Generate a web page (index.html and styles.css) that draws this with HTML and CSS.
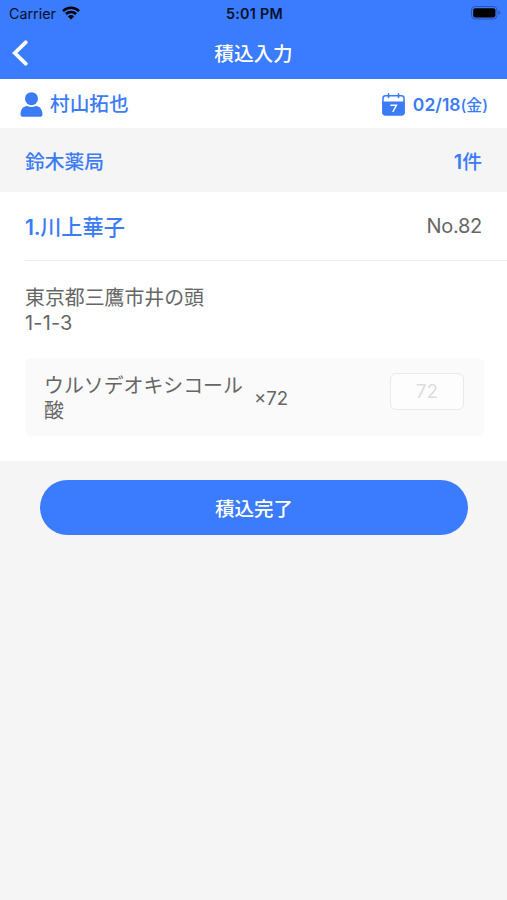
FILE: index.html
```html
<!DOCTYPE html>
<html lang="ja">
<head>
    <meta charset="UTF-8">
    <meta name="viewport" content="width=device-width, initial-scale=1.0">
    <title>積込入力</title>
    <link rel="stylesheet" href="styles.css">
</head>
<body>
    <header class="header">
        <div class="status-bar">
            <div class="carrier">
                <span>Carrier</span>
                <svg class="wifi" viewBox="0 0 18 14" width="18" height="14">
                    <path d="M1 5.1a11.5 11.5 0 0 1 16 0M3.9 8a7.4 7.4 0 0 1 10.2 0" fill="none" stroke="currentColor" stroke-width="2.5"/>
                    <path d="M9 13.6L5.9 10.4a4.5 4.5 0 0 1 6.2 0z" fill="currentColor"/>
                </svg>
            </div>
            <div class="clock">5:01 PM</div>
            <div class="battery">
                <svg viewBox="0 0 30 14" width="30" height="14">
                    <rect x=".5" y=".5" width="25.5" height="12.5" rx="3.5" fill="none" stroke="#2855b4"/>
                    <rect x="2.2" y="2.2" width="22.2" height="9.2" rx="2" fill="#000"/>
                    <path d="M27.5 4.6c2.2.7 2.2 3.6 0 4.3z" fill="#2855b4"/>
                </svg>
            </div>
        </div>
        <div class="nav-bar">
            <a class="back" href="#" aria-label="戻る">
                <svg viewBox="0 0 16 26" width="16" height="26">
                    <path d="M13.7 2.3L2.8 13l10.900 10.700" fill="none" stroke="#fff" stroke-width="3.8" stroke-linecap="round" stroke-linejoin="miter"/>
                </svg>
            </a>
            <h1>積込入力</h1>
        </div>
    </header>

    <div class="user-bar">
        <div class="user">
            <svg viewBox="0 0 22 25" width="22" height="25" fill="currentColor">
                <circle cx="11" cy="6.7" r="6.5"/>
                <path d="M0 22.5C0 17 3 14.2 6.5 14c3 1.2 6 1.2 9 0 3.5.2 6.5 3 6.5 8.5q0 2.200-2.200 2.200H2.200Q0 24.700 0 22.500z"/>
            </svg>
            <span>村山拓也</span>
        </div>
        <div class="date">
            <svg viewBox="0 0 23 23" width="23" height="23">
                <rect x="1" y="2.700" width="21" height="19" rx="2.500" fill="#fff" stroke="currentColor" stroke-width="1.500"/>
                <path d="M.3 8.500h22.400V19.500q0 3-3 3H3.300q-3 0-3-3z" fill="currentColor"/>
                <path d="M6.500 .8v3.600M16.500 .8v3.600" stroke="currentColor" stroke-width="1.600" stroke-linecap="round"/>
                <path d="M8.400 12.300h6L10.800 19" fill="none" stroke="#fff" stroke-width="1.500"/>
            </svg>
            <span>02/18<small>(金)</small></span>
        </div>
    </div>

    <div class="shop-bar">
        <span>鈴木薬局</span>
        <span><b>1</b>件</span>
    </div>

    <main class="patient">
        <div class="patient-head">
            <h2><b>1.</b>川上華子</h2>
            <span class="number">No.82</span>
        </div>
        <p class="address">東京都三鷹市井の頭<br><span class="block">1-1-3</span></p>
        <div class="medicine">
            <span class="medicine-name">ウルソデオキシコール酸</span>
            <span class="amount">×72</span>
            <input class="count" type="text" value="72" disabled>
        </div>
    </main>

    <div class="actions">
        <button class="submit" type="button">積込完了</button>
    </div>
</body>
</html>
```
FILE: styles.css
```css
* {
    box-sizing: border-box;
}
body {
    font-family: Inter, "Noto Sans CJK JP", sans-serif;
    font-size: 20px;
    margin: 0;
    background-color: #f5f5f5;
    color: #666;
}
h1, h2, p {
    margin: 0;
}
.header {
    height: 79px;
    background: #3b7bfd;
    color: #fff;
}
.status-bar {
    display: grid;
    grid-template-columns: 1fr auto 1fr;
    align-items: center;
    height: 27px;
    padding: 0 6px 0 9px;
    color: #07112a;
    font-size: 14.3px;
    line-height: 27px;
}
.carrier {
    display: flex;
    align-items: center;
    gap: 6px;
}
.wifi {
    color: #000;
    margin-top: -2px;
}
.clock {
    font-weight: 600;
    font-size: 14.3px;
    letter-spacing: 0.3px;
    margin-right: 1px;
}
.battery {
    display: flex;
    justify-content: flex-end;
    margin-top: -1px;
}
.nav-bar {
    display: grid;
    grid-template-columns: 1fr auto 1fr;
    align-items: center;
    height: 50px;
}
.nav-bar h1 {
    padding-top: 2px;
    font-size: 19.6px;
    font-weight: 500;
    line-height: 50px;
}
.back {
    display: flex;
    padding-left: 12px;
}
.user-bar {
    display: flex;
    justify-content: space-between;
    align-items: center;
    height: 49px;
    padding: 1px 19px 0 20px;
    background: #fff;
    color: #3b7bf5;
    font-weight: 500;
    line-height: 28px;
}
.user, .date {
    display: flex;
    align-items: center;
}
.user {
    gap: 8px;
    font-size: 19.7px;
}
.user svg {
    width: 23px;
    margin-right: -1px;
}
.date {
    gap: 8px;
    font-size: 17.5px;
    font-weight: 600;
}
.date span {
    padding-top: 2px;
}
.date small {
    font-size: 15.8px;
    font-weight: 500;
}
.shop-bar {
    display: flex;
    justify-content: space-between;
    align-items: center;
    height: 64px;
    padding: 4px 25px 0;
    color: #3b7bf5;
    font-size: 19.8px;
    font-weight: 500;
    line-height: 30px;
}
.shop-bar b, .patient-head b {
    font-weight: 600;
}
.patient {
    height: 269px;
    padding-left: 25px;
    background: #fff;
}
.patient-head {
    display: flex;
    justify-content: space-between;
    align-items: center;
    height: 69px;
    padding-right: 25px;
    border-bottom: 1px solid #eee;
}
.patient-head h2 {
    padding-top: 1px;
    color: #3b7bf5;
    font-size: 21.2px;
    font-weight: 500;
    line-height: 30px;
}
.patient-head b {
    letter-spacing: -0.3px;
}
.number {
    font-size: 20px;
    letter-spacing: -0.3px;
}
.address {
    padding-top: 25px;
    font-size: 19.9px;
    line-height: 25px;
}
.block {
    letter-spacing: 0.2px;
}
.medicine {
    display: flex;
    align-items: center;
    height: 78px;
    margin: 22px 23px 0 0;
    padding: 2px 20px 0 19px;
    border-radius: 6px;
    background: #fafafa;
    line-height: 25px;
}
.medicine-name {
    width: 200px;
    padding-top: 1px;
    font-size: 19.9px;
}
.amount {
    margin-left: 10px;
    font-size: 18.6px;
}
.count {
    width: 74px;
    height: 37px;
    margin: -14px 0 0 auto;
    padding: 0;
    border: 1px solid #e9e9e9;
    border-radius: 6px;
    background: #fdfdfd;
    color: #ddd;
    font-family: inherit;
    font-size: 19px;
    text-align: center;
}
.actions {
    padding: 19px 39px 0 40px;
}
.submit {
    display: block;
    width: 100%;
    height: 55px;
    padding: 0;
    border: none;
    border-radius: 28px;
    background: #3b7bfd;
    color: #fff;
    font-family: inherit;
    font-size: 19.5px;
    font-weight: 500;
}
```
